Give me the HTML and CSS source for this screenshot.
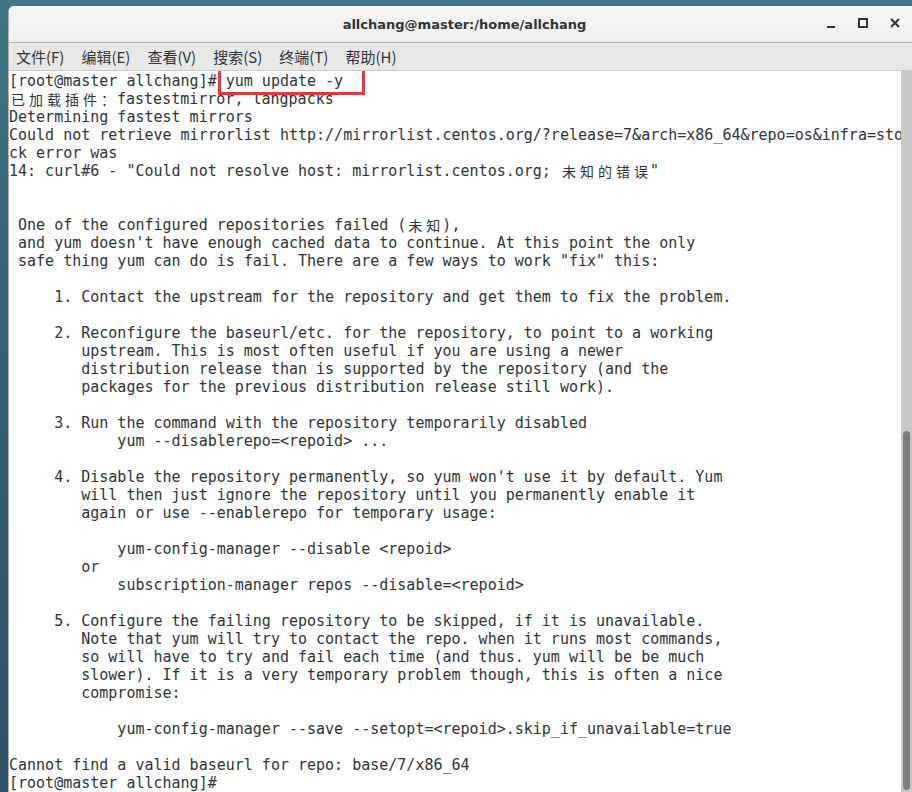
FILE: index.html
```html
<!DOCTYPE html>
<html lang="zh-CN">
  <head>
    <meta charset="UTF-8" />
    <meta name="viewport" content="width=device-width, initial-scale=1.0" />
    <title>allchang@master:/home/allchang</title>
    <link rel="stylesheet" href="styles.css">
  </head>
  <body>
    <div class="window">
      <div class="titleBar">
        <div class="title">allchang@master:/home/allchang</div>
        <div class="controls">
          <svg class="ctl" width="16" height="16" viewBox="0 0 16 16"><rect x="4" y="11" width="8" height="2" fill="#2e3436"/></svg>
          <svg class="ctl" width="16" height="16" viewBox="0 0 16 16"><rect x="4" y="4" width="8" height="8" fill="none" stroke="#2e3436" stroke-width="2"/></svg>
          <svg class="ctl" width="16" height="16" viewBox="0 0 16 16"><path d="M4 4 L12 12 M12 4 L4 12" stroke="#2e3436" stroke-width="2"/></svg>
        </div>
      </div>
      <div class="menuBar">
        <span class="menuItem">文件(F)</span>
        <span class="menuItem">编辑(E)</span>
        <span class="menuItem">查看(V)</span>
        <span class="menuItem">搜索(S)</span>
        <span class="menuItem">终端(T)</span>
        <span class="menuItem">帮助(H)</span>
      </div>
      <div class="termArea">
<pre class="term">[root@master allchang]# <span class="mark">yum update -y</span>
<span class="w">已</span><span class="w">加</span><span class="w">载</span><span class="w">插</span><span class="w">件</span><span class="w">：</span>fastestmirror, langpacks
Determining fastest mirrors
Could not retrieve mirrorlist http://mirrorlist.centos.org/?release=7&amp;arch=x86_64&amp;repo=os&amp;infra=sto
ck error was
14: curl#6 - "Could not resolve host: mirrorlist.centos.org; <span class="w">未</span><span class="w">知</span><span class="w">的</span><span class="w">错</span><span class="w">误</span>"


 One of the configured repositories failed (<span class="w">未</span><span class="w">知</span>),
 and yum doesn't have enough cached data to continue. At this point the only
 safe thing yum can do is fail. There are a few ways to work "fix" this:

     1. Contact the upstream for the repository and get them to fix the problem.

     2. Reconfigure the baseurl/etc. for the repository, to point to a working
        upstream. This is most often useful if you are using a newer
        distribution release than is supported by the repository (and the
        packages for the previous distribution release still work).

     3. Run the command with the repository temporarily disabled
            yum --disablerepo=&lt;repoid&gt; ...

     4. Disable the repository permanently, so yum won't use it by default. Yum
        will then just ignore the repository until you permanently enable it
        again or use --enablerepo for temporary usage:

            yum-config-manager --disable &lt;repoid&gt;
        or
            subscription-manager repos --disable=&lt;repoid&gt;

     5. Configure the failing repository to be skipped, if it is unavailable.
        Note that yum will try to contact the repo. when it runs most commands,
        so will have to try and fail each time (and thus. yum will be be much
        slower). If it is a very temporary problem though, this is often a nice
        compromise:

            yum-config-manager --save --setopt=&lt;repoid&gt;.skip_if_unavailable=true

Cannot find a valid baseurl for repo: base/7/x86_64
[root@master allchang]# </pre>
        <div class="scrollTrough">
          <div class="scrollThumb"></div>
        </div>
      </div>
    </div>
  </body>
</html>
```

FILE: styles.css
```css
html,
body {
  margin: 0;
  height: 100%;
  overflow: hidden;
}

body {
  background: linear-gradient(to bottom, #3f7884 0%, #36667a 30%, #2f5068 100%);
  padding: 6px 0 0 8px;
  box-sizing: border-box;
}

.window {
  width: 904px;
  height: 786px;
  display: flex;
  flex-direction: column;
  background: #fff;
  border-left: 1px solid #a9adad;
  border-radius: 6px 0 0 0;
  box-sizing: border-box;
  overflow: hidden;
}

.titleBar {
  height: 36px;
  flex: none;
  display: flex;
  align-items: center;
  justify-content: center;
  position: relative;
  background: linear-gradient(to bottom, #f6f6f6, #efefef);
  border-bottom: 1px solid #b3b3b0;
}

.title {
  font-family: "DejaVu Sans", sans-serif;
  font-weight: bold;
  font-size: 13px;
  color: #2e3436;
  margin-left: 8px;
}

.controls {
  position: absolute;
  right: 9px;
  top: 9px;
  display: flex;
  gap: 16px;
}

.menuBar {
  height: 27px;
  flex: none;
  display: flex;
  align-items: center;
  gap: 17px;
  padding-left: 7px;
  background: #e8e8e7;
  border-bottom: 1px solid #cbcbc8;
  font-family: "Noto Sans CJK SC", "Noto Sans", sans-serif;
  font-size: 15px;
  color: #2e3436;
}

.termArea {
  flex: 1;
  display: flex;
  min-height: 0;
}

.term {
  flex: 1;
  margin: 0;
  padding-top: 1px;
  font-family: "DejaVu Sans Mono", monospace;
  font-size: 15px;
  line-height: 18px;
  color: #2e3436;
  white-space: pre;
  overflow: hidden;
}

.w {
  display: inline-block;
  width: 18px;
  text-align: center;
  font-family: "Noto Sans CJK SC", sans-serif;
  font-size: 14px;
  line-height: 18px;
  vertical-align: top;
}

.mark {
  position: relative;
}

.mark::after {
  content: '';
  position: absolute;
  left: -8px;
  right: -22px;
  top: -5px;
  bottom: -5px;
  border: 3px solid #e8383d;
}

.scrollTrough {
  width: 11px;
  flex: none;
  background: #c6c7c6;
  padding: 360px 2px 2px 2px;
  box-sizing: border-box;
}

.scrollThumb {
  width: 7px;
  height: 359px;
  background: #7b7f7f;
  border-radius: 4px;
}
```
